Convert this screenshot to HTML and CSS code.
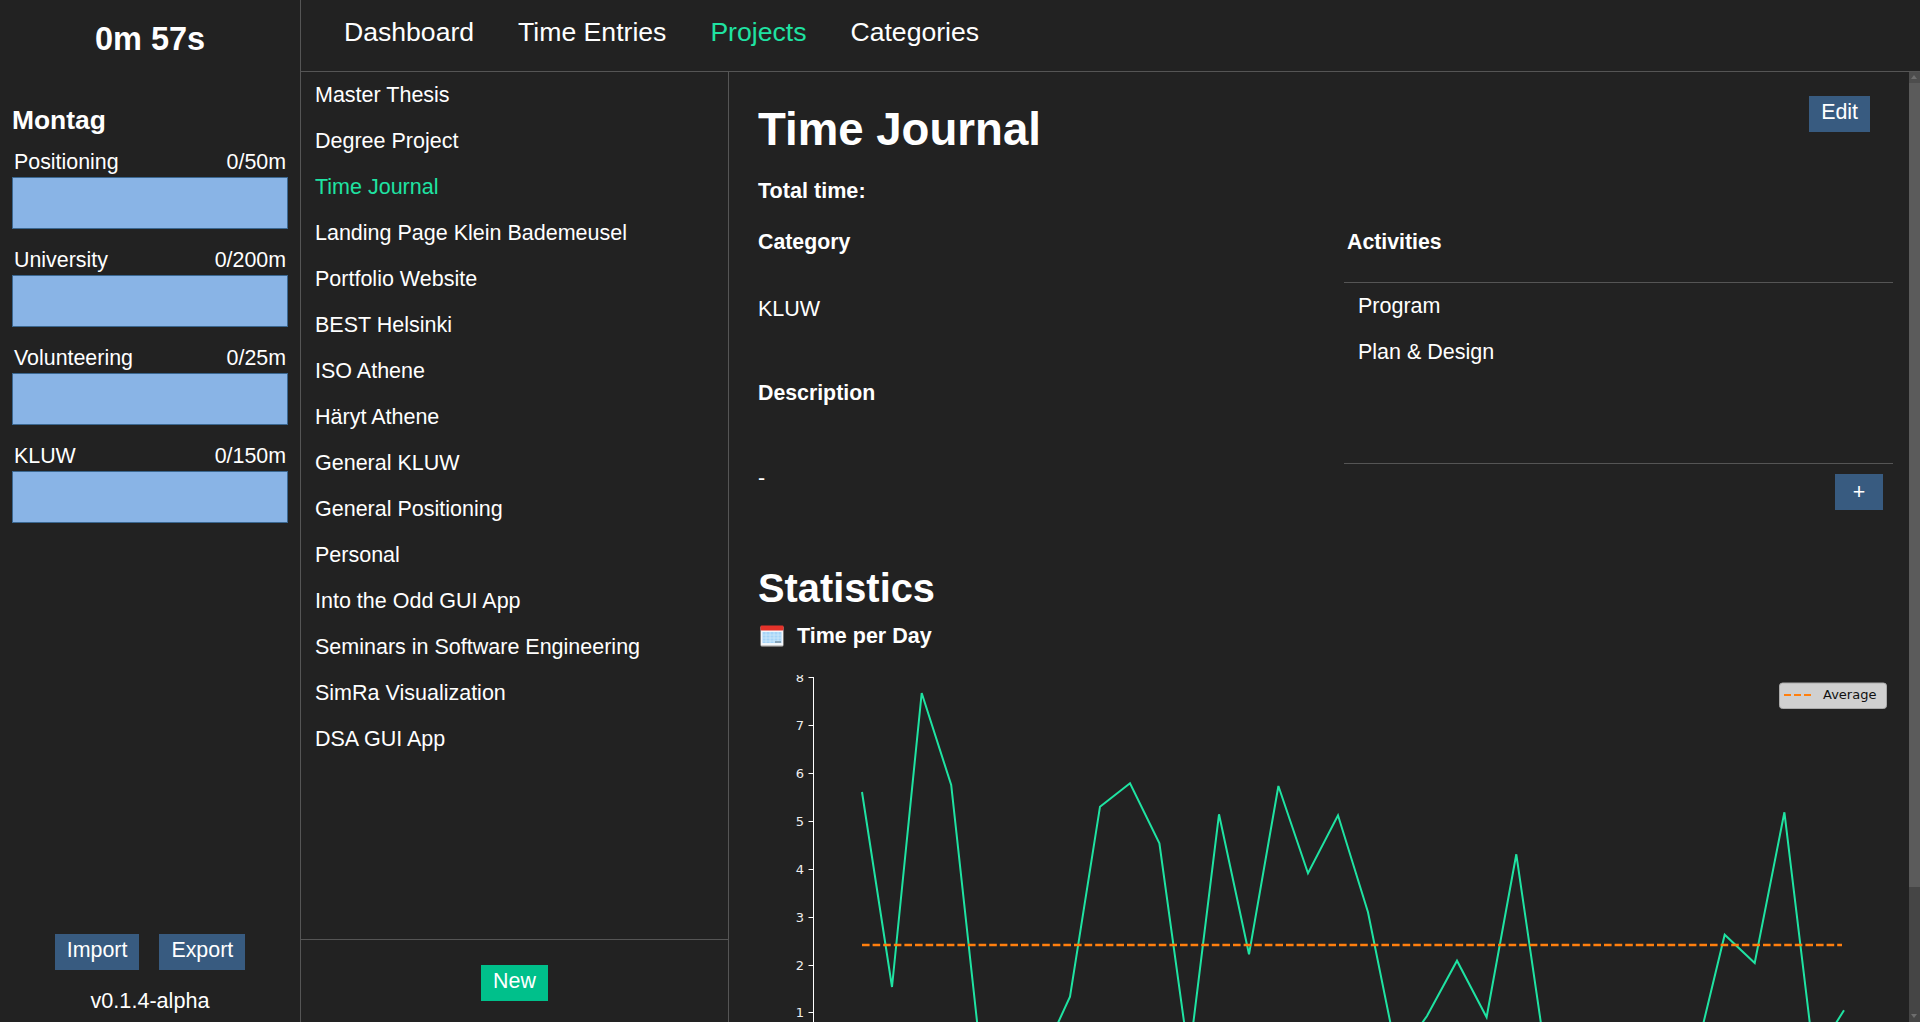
FILE: index.html
```html
<!DOCTYPE html>
<html lang="en">
<head>
  <meta charset="UTF-8">
  <meta name="viewport" content="width=device-width, initial-scale=1.0">
  <title>Time Journal</title>
  <link rel="stylesheet" href="styles.css">
</head>
<body>
  <!-- timer and daily goals -->
  <aside class="sidebar">
    <div class="timer">0m 57s</div>
    <h2 class="day">Montag</h2>
    <div class="goals">
      <div class="goal">
        <div class="goal-head"><span>Positioning</span><span>0/50m</span></div>
        <div class="goal-bar"></div>
      </div>
      <div class="goal">
        <div class="goal-head"><span>University</span><span>0/200m</span></div>
        <div class="goal-bar"></div>
      </div>
      <div class="goal">
        <div class="goal-head"><span>Volunteering</span><span>0/25m</span></div>
        <div class="goal-bar"></div>
      </div>
      <div class="goal">
        <div class="goal-head"><span>KLUW</span><span>0/150m</span></div>
        <div class="goal-bar"></div>
      </div>
    </div>
    <div class="sidebar-foot">
      <div class="io-buttons">
        <button class="btn">Import</button>
        <button class="btn">Export</button>
      </div>
      <div class="version">v0.1.4-alpha</div>
    </div>
  </aside>

  <div class="page">
    <nav class="nav">
      <a class="nav-link">Dashboard</a>
      <a class="nav-link">Time Entries</a>
      <a class="nav-link active">Projects</a>
      <a class="nav-link">Categories</a>
    </nav>

    <div class="content">
      <!-- project list -->
      <section class="projects">
        <ul class="project-list">
          <li>Master Thesis</li>
          <li>Degree Project</li>
          <li class="active">Time Journal</li>
          <li>Landing Page Klein Bademeusel</li>
          <li>Portfolio Website</li>
          <li>BEST Helsinki</li>
          <li>ISO Athene</li>
          <li>Häryt Athene</li>
          <li>General KLUW</li>
          <li>General Positioning</li>
          <li>Personal</li>
          <li>Into the Odd GUI App</li>
          <li>Seminars in Software Engineering</li>
          <li>SimRa Visualization</li>
          <li>DSA GUI App</li>
        </ul>
        <div class="projects-foot">
          <button class="btn btn-new">New</button>
        </div>
      </section>

      <!-- project details -->
      <main class="detail">
        <div class="detail-head">
          <h1>Time Journal</h1>
          <button class="btn btn-edit">Edit</button>
        </div>
        <div class="total">Total time:</div>
        <div class="columns">
          <div class="info">
            <h4 class="label">Category</h4>
            <p class="category">KLUW</p>
            <h4 class="label">Description</h4>
            <p class="description">-</p>
          </div>
          <div class="activities">
            <h4 class="label activities-title">Activities</h4>
            <ul class="activity-list">
              <li>Program</li>
              <li>Plan &amp; Design</li>
            </ul>
            <div class="activities-foot">
              <button class="btn btn-add">+</button>
            </div>
          </div>
        </div>

        <h2 class="stats-title">Statistics</h2>
        <div class="stats-sub">
          <svg class="cal-icon" width="24" height="22" viewBox="0 0 24 22">
            <rect x="0.5" y="1" width="23" height="20.5" rx="1.5" fill="#c9c9c9"/>
            <rect x="1" y="1" width="22" height="19" fill="#f4f7fa"/>
            <rect x="0.5" y="0.5" width="23" height="5" rx="1" fill="#e5332a"/>
            <rect x="2.5" y="7" width="19" height="11" fill="#a5d4f7"/>
            <path d="M2.5 10h19M2.5 13h19M2.5 16h19M6 7v11M10 7v11M14 7v11M18 7v11" stroke="#d6ecfb" stroke-width="0.7"/>
            <rect x="15" y="16.2" width="6" height="1.6" fill="#7d97aa"/>
          </svg>
          <span>Time per Day</span>
        </div>
        <svg class="chart" width="1135" height="400" viewBox="0 0 1135 400">
          <g class="axis">
            <line x1="55.5" y1="2" x2="55.5" y2="400"/>
            <line x1="50.5" y1="2.5" x2="55.5" y2="2.5"/>
            <line x1="50.5" y1="50.5" x2="55.5" y2="50.5"/>
            <line x1="50.5" y1="98.5" x2="55.5" y2="98.5"/>
            <line x1="50.5" y1="146.5" x2="55.5" y2="146.5"/>
            <line x1="50.5" y1="194.5" x2="55.5" y2="194.5"/>
            <line x1="50.5" y1="242.5" x2="55.5" y2="242.5"/>
            <line x1="50.5" y1="290.5" x2="55.5" y2="290.5"/>
            <line x1="50.5" y1="337.5" x2="55.5" y2="337.5"/>
          </g>
          <g class="tick-labels">
            <text x="46" y="7">8</text>
            <text x="46" y="55">7</text>
            <text x="46" y="103">6</text>
            <text x="46" y="151">5</text>
            <text x="46" y="199">4</text>
            <text x="46" y="247">3</text>
            <text x="46" y="295">2</text>
            <text x="46" y="342">1</text>
          </g>
          <polyline class="series" points="104,117 134,312 163.7,18 193.2,110 223,383 252.7,386 282.5,386 312,321.7 342,131.7 372,108.3 401.4,168.3 431,383 461,139.3 491,279.3 520.4,111 550,198.3 580,140.3 610,237.3 639.5,383 669,341 699,285.7 728.6,342.3 758.3,179.3 788,383 818,386 847,386 877,386 907,386 937,383 966.7,259.7 996.7,288 1026.4,137.3 1056,383 1086,335.3"/>
          <line class="average" x1="104" y1="270" x2="1084" y2="270"/>
          <rect class="legend-box" x="1021.5" y="8" width="107" height="25.5" rx="3"/>
          <line class="legend-line" x1="1026" y1="20" x2="1054" y2="20"/>
          <text class="legend-text" x="1065" y="24">Average</text>
        </svg>
      </main>

      <div class="scrollbar">
        <div class="scroll-up"></div>
        <div class="scroll-thumb"></div>
        <div class="scroll-track"></div>
        <div class="scroll-down"></div>
      </div>
    </div>
  </div>
</body>
</html>
```

FILE: styles.css
```css
* {
  box-sizing: border-box;
}
html, body {
  height: 100%;
}
body {
  margin: 0;
  display: flex;
  height: 1022px;
  overflow: hidden;
  background: #222222;
  color: #ffffff;
  font-family: "Liberation Sans", Arial, sans-serif;
  font-size: 21.5px;
}
h1, h2, h4, p, ul {
  margin: 0;
  padding: 0;
}
ul {
  list-style: none;
}
.btn {
  border: 0;
  border-radius: 0;
  padding: 0 12px 4px;
  height: 36px;
  background: #385b80;
  color: #ffffff;
  font-family: inherit;
  font-size: 21.4px;
  line-height: 32px;
}

/* sidebar */
.sidebar {
  flex: none;
  width: 301px;
  display: flex;
  flex-direction: column;
  border-right: 1px solid #555555;
  padding: 0 12px;
}
.timer {
  margin-top: 19px;
  text-align: center;
  font-size: 32.5px;
  font-weight: bold;
  line-height: 40px;
}
.day {
  margin-top: 42px;
  font-size: 26.4px;
  line-height: 38px;
}
.goals {
  margin-top: 2px;
}
.goal {
  margin-bottom: 10px;
}
.goal-head {
  display: flex;
  justify-content: space-between;
  padding: 5px 2px 0 2px;
  height: 36px;
  line-height: 32px;
  font-size: 21.4px;
}
.goal-bar {
  height: 52px;
  background: #89b4e6;
  border: 1px solid #3b6790;
}
.sidebar-foot {
  margin-top: auto;
  padding-bottom: 5px;
}
.io-buttons {
  display: flex;
  justify-content: center;
  gap: 20px;
}
.version {
  margin-top: 15px;
  text-align: center;
  font-size: 21.6px;
  line-height: 32px;
}

/* top navigation */
.page {
  flex: 1;
  display: flex;
  flex-direction: column;
  min-width: 0;
}
.nav {
  flex: none;
  display: flex;
  gap: 44px;
  height: 72px;
  padding: 16px 0 0 43px;
  border-bottom: 1px solid #555555;
  font-size: 26.6px;
  line-height: 33px;
}
.active {
  color: #1fe3a2;
}

/* project list */
.content {
  flex: 1;
  display: flex;
  min-height: 0;
}
.projects {
  flex: none;
  width: 428px;
  display: flex;
  flex-direction: column;
  border-right: 1px solid #555555;
}
.project-list {
  flex: 1;
  padding: 0 14px;
}
.project-list li {
  height: 46px;
  line-height: 46px;
}
.projects-foot {
  flex: none;
  height: 83px;
  padding-top: 25px;
  border-top: 1px solid #555555;
  text-align: center;
}
.btn-new {
  background: #00c08b;
}

/* project details */
.detail {
  flex: 1;
  min-width: 0;
  padding: 0 16px 0 29px;
  overflow: hidden;
}
.detail-head {
  display: flex;
  justify-content: space-between;
  align-items: flex-start;
  height: 104px;
  padding-top: 24px;
}
.detail-head h1 {
  margin-top: 6px;
  font-size: 45.6px;
  line-height: 56px;
}
.btn-edit {
  margin-right: 23px;
}
.total {
  margin-top: 2px;
  font-size: 21.6px;
  font-weight: bold;
  line-height: 26px;
}
.columns {
  display: flex;
  margin-top: 25px;
}
.info {
  width: 586px;
  flex: none;
}
.label {
  font-size: 21.3px;
  line-height: 26px;
}
.category {
  margin-top: 41px;
  line-height: 26px;
}
.info .label + .category + .label {
  margin-top: 58px;
}
.description {
  margin-top: 59px;
  height: 26px;
  line-height: 26px;
}
.activities {
  flex: 1;
}
.activities-title {
  margin-left: 3px;
  padding-bottom: 27px;
}
.activity-list {
  height: 182px;
  padding: 0 14px;
  border-top: 1px solid #555555;
  border-bottom: 1px solid #555555;
}
.activity-list li {
  height: 46px;
  line-height: 46px;
}
.activities-foot {
  display: flex;
  justify-content: flex-end;
  padding: 10px 10px 0 0;
}
.btn-add {
  width: 48px;
  padding: 0;
}
.stats-title {
  margin-top: 54px;
  font-size: 39.8px;
  line-height: 48px;
}
.stats-sub {
  display: flex;
  align-items: center;
  gap: 13px;
  margin-top: 9px;
  height: 30px;
  padding-left: 2px;
  font-weight: bold;
  line-height: 30px;
}
.chart {
  display: block;
  margin-top: 24px;
}
.axis line {
  stroke: #ffffff;
  stroke-width: 1;
}
.tick-labels text {
  fill: #eeeeee;
  font-family: "DejaVu Sans", sans-serif;
  font-size: 13px;
  text-anchor: end;
}
.series {
  fill: none;
  stroke: #1fe3a2;
  stroke-width: 2;
}
.average {
  stroke: #ff7f0e;
  stroke-width: 2.4;
  stroke-dasharray: 7.6 3;
}
.legend-box {
  fill: #d0d0d0;
  stroke: #aaaaaa;
  stroke-width: 1;
}
.legend-line {
  stroke: #ff7f0e;
  stroke-width: 2;
  stroke-dasharray: 7 3;
}
.legend-text {
  fill: #111111;
  font-family: "DejaVu Sans", sans-serif;
  font-size: 13px;
}

/* scrollbar of the details pane */
.scrollbar {
  flex: none;
  width: 11px;
  display: flex;
  flex-direction: column;
  background: #454545;
}
.scroll-up, .scroll-down {
  flex: none;
  height: 11px;
  position: relative;
}
.scroll-up {
  background: #4d4d4d;
}
.scroll-up::after, .scroll-down::after {
  content: "";
  position: absolute;
  left: 2px;
  border-left: 3.5px solid transparent;
  border-right: 3.5px solid transparent;
}
.scroll-up::after {
  top: 3px;
  border-bottom: 4px solid #6e6e6e;
}
.scroll-down::after {
  top: 3px;
  border-top: 4px solid #6e6e6e;
}
.scroll-thumb {
  flex: none;
  height: 804px;
  background: #5b5b5b;
}
.scroll-track {
  flex: 1;
}
```
